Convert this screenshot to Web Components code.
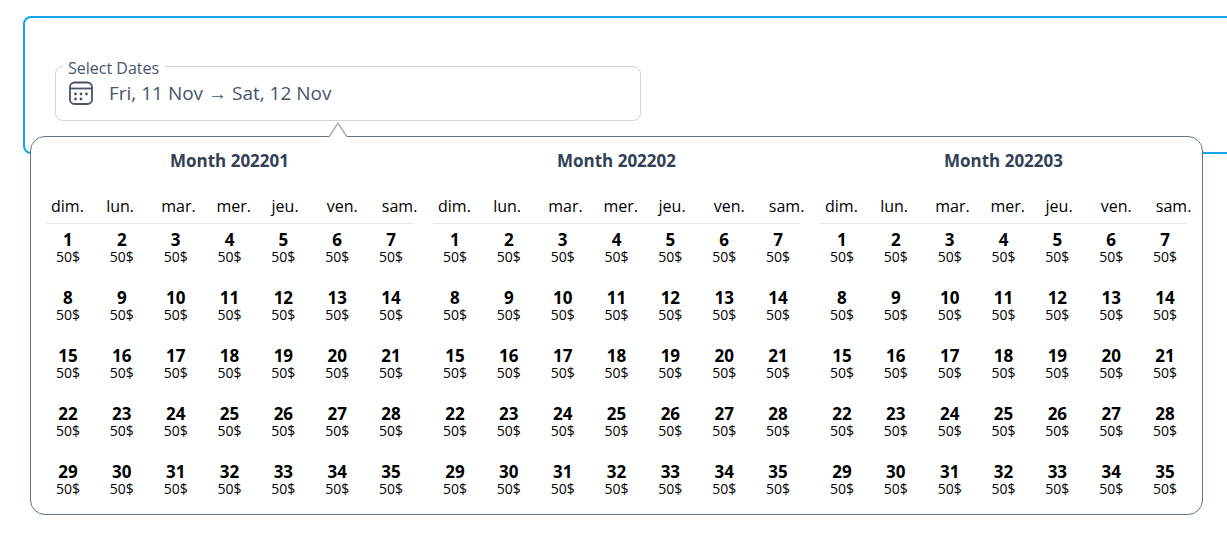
<!DOCTYPE html>
<html lang="en">
<head>
<meta charset="utf-8">
<title>Select Dates</title>
<style>
  body { box-sizing: border-box; margin: 0; padding-top: 16px; min-height: 100vh; overflow-x: hidden; background: #fff; font-family: "Open Sans", "Noto Sans", sans-serif; color: #000; }
</style>
</head>
<body>
<date-panel>
  <date-field label="Select Dates">Fri, 11 Nov → Sat, 12 Nov</date-field>
  <date-popover slot="popover">
    <month-grid month="202201"></month-grid>
    <month-grid month="202202"></month-grid>
    <month-grid month="202203"></month-grid>
  </date-popover>
</date-panel>

<script>
const attach = (el, html) => { el.attachShadow({ mode: "open" }).innerHTML = html; };

customElements.define("date-panel", class extends HTMLElement {
  constructor() {
    super();
    attach(this, `
      <style>
        :host { display: block; margin: 0 -32px 0 23px; border: 2px solid #0ea5e9; border-radius: 8px; padding: 40px 30px 31px; }
        .content { position: relative; }
      </style>
      <div class="content"><slot></slot><slot name="popover"></slot></div>`);
  }
});

customElements.define("date-field", class extends HTMLElement {
  constructor() {
    super();
    attach(this, `
      <style>
        :host { display: block; width: 50%; color: #475569; }
        fieldset { margin: 0; min-width: 0; border: 1px solid #cbd5e1; border-radius: 8px; padding: 0 13px 8px; }
        legend { margin-left: -6px; padding: 0 6px 0 5px; height: 16px; font-size: 16px; line-height: 20px; }
        button { display: flex; align-items: center; gap: 16px; width: 100%; height: 38px; padding: 0; border: 0; background: none; color: inherit; font: inherit; font-size: 19px; line-height: 24px; text-align: left; cursor: pointer; }
        svg { flex: none; }
      </style>
      <fieldset>
        <legend>${this.getAttribute("label")}</legend>
        <button type="button">
          <svg width="24" height="24" viewBox="0 0 24 24" fill="none" stroke="#475569" stroke-width="1.8" aria-hidden="true">
            <rect x="1" y="1.5" width="22" height="21.5" rx="4.5"/>
            <path d="M1 7.5h22"/>
            <g fill="#475569" stroke="none">
              <circle cx="6.5" cy="13" r="1.4"/><circle cx="12" cy="13" r="1.4"/><circle cx="17.5" cy="13" r="1.4"/>
              <circle cx="6.5" cy="18" r="1.4"/><circle cx="12" cy="18" r="1.4"/>
            </g>
          </svg>
          <span><slot></slot></span>
        </button>
      </fieldset>`);
  }
});

customElements.define("date-popover", class extends HTMLElement {
  constructor() {
    super();
    attach(this, `
      <style>
        :host { position: absolute; top: 78px; left: -25px; right: 24px; display: grid; grid-template-columns: repeat(3, minmax(0, 1fr)); gap: 10px; border: 1px solid #64748b; border-radius: 15px; background: #fff; padding: 12px 10px 0; }
        .caret { position: absolute; left: 297px; top: -16px; }
      </style>
      <svg class="caret" width="20" height="17" viewBox="0 0 20 17" aria-hidden="true">
        <path d="M1 16L10 2L19 16V17H1Z" fill="#fff"/>
        <path d="M1 16L10 2L19 16" fill="none" stroke="#b4b4b4" stroke-width="1.6"/>
      </svg>
      <slot></slot>`);
  }
});

customElements.define("month-grid", class extends HTMLElement {
  constructor() {
    super();
    const names = ["dim.", "lun.", "mar.", "mer.", "jeu.", "ven.", "sam."];
    const head = names.map(n => `<th scope="col">${n}</th>`).join("");
    let rows = "";
    for (let w = 0; w < 5; w++) {
      rows += "<tr>";
      for (let d = 1; d <= 7; d++) rows += `<td><button type="button"><b>${w * 7 + d}</b><span>50$</span></button></td>`;
      rows += "</tr>";
    }
    attach(this, `
      <style>
        :host { display: block; }
        h2 { margin: 0 0 21px; color: #334155; font-size: 17px; font-weight: 700; line-height: 24px; text-align: center; }
        table, thead, tbody { display: block; }
        tr { display: grid; grid-template-columns: repeat(7, minmax(0, 1fr)); }
        thead tr { column-gap: 24px; margin: 0 5px; border-bottom: 1px solid #e5e7eb; padding: 0 0 5px 5px; }
        th { padding: 0; font-size: 16px; font-weight: 400; line-height: 24px; text-align: left; white-space: nowrap; }
        td { padding: 0; }
        button { display: flex; flex-direction: column; align-items: center; width: 100%; height: 58px; border: 0; background: none; padding: 7px 0 0; color: inherit; font: inherit; cursor: pointer; }
        b { font-size: 17px; font-weight: 700; line-height: 18px; }
        span { font-size: 14px; font-weight: 400; line-height: 16px; }
      </style>
      <h2>Month ${this.getAttribute("month")}</h2>
      <table><thead><tr>${head}</tr></thead><tbody>${rows}</tbody></table>`);
  }
});
</script>
</body>
</html>
